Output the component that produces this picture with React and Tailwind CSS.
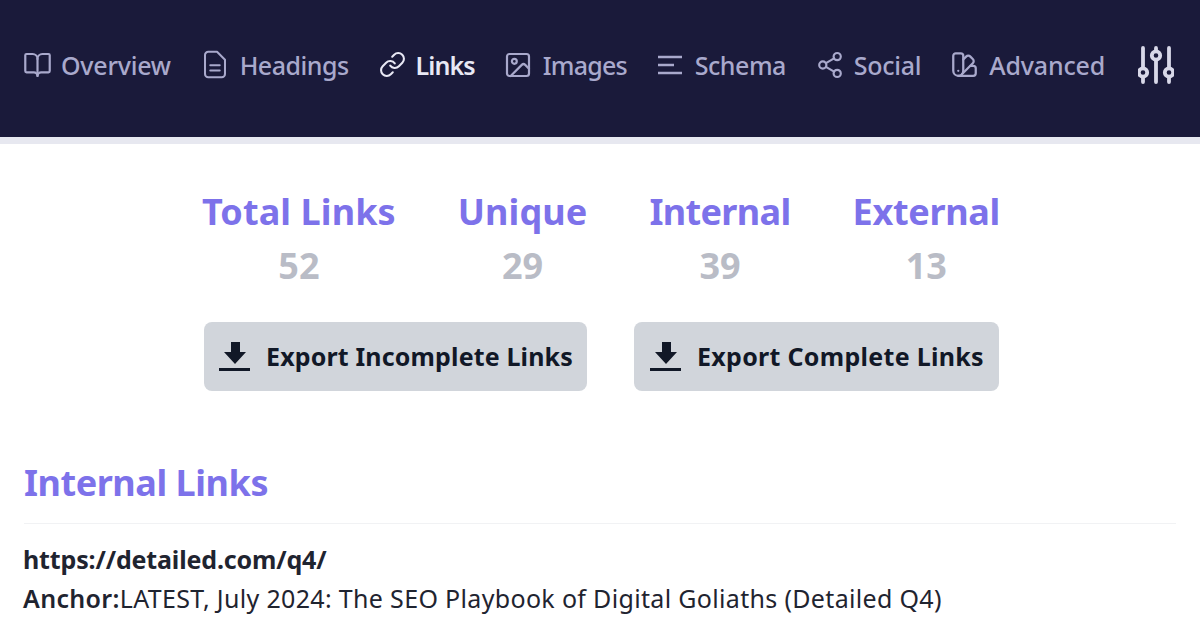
import React from 'react';
import { BookOpen, Link, Image, Share2, SwatchBook } from 'lucide-react';

const FileIcon = ({ className }) => (
    <svg viewBox="4 2 16 20" fill="none" stroke="currentColor" strokeWidth="1.5" strokeLinecap="round" strokeLinejoin="round" className={className}>
        <path d="M7 2.6h6.5l5.900 5.900V19a2.400 2.400 0 0 1-2.400 2.400H7A2.400 2.400 0 0 1 4.600 19V5A2.400 2.400 0 0 1 7 2.600z" />
        <path d="M8.500 12.500h7M8.500 16.500h7" />
    </svg>
);

const SchemaIcon = ({ className }) => (
    <svg viewBox="0 0 24 20" fill="none" stroke="currentColor" strokeWidth="2.4" className={className}>
        <path d="M0 2h24M0 10h16M0 18h24" />
    </svg>
);

const SlidersIcon = ({ className }) => (
    <svg viewBox="0 0 36 38" fill="none" stroke="currentColor" strokeWidth="3.800" strokeLinecap="round" className={className}>
        <path d="M5 2v19M5 32v4M18 2v3M18 14v22M31 2v19M31 32v4" />
        <circle cx="5" cy="26.500" r="4.200" />
        <circle cx="18" cy="9.500" r="4.200" />
        <circle cx="31" cy="26.500" r="4.200" />
    </svg>
);

const DownloadIcon = () => (
    <svg viewBox="0 0 31 29" fill="currentColor" className="w-[31px] h-[29px] shrink-0">
        <path d="M12 0h9v10h6L16 22 5 10h7zM0 26h31v3H0z" />
    </svg>
);

const navItems = [
    { label: 'Overview', icon: BookOpen, box: '2 3 20 18', iconClass: 'w-[25px] h-[22px] ml-[1px] mr-[11px]', text: 'tracking-[-0.25px]', after: 'mr-[33px]' },
    { label: 'Headings', icon: FileIcon, iconClass: 'w-[22px] h-[27px] mr-[14px]', text: 'tracking-[-0.5px]', after: 'mr-[31px]' },
    { label: 'Links', icon: Link, box: '2 2 20 20', iconClass: 'w-[23px] h-[23px] ml-[1px] mr-[12px]', text: 'tracking-[-0.9px]', after: 'mr-[31px]', active: true },
    { label: 'Images', icon: Image, box: '3 3 18 18', iconClass: 'w-[22px] h-[22px] ml-[1px] mr-[14px]', text: 'tracking-[-0.8px]', after: 'mr-[31px]' },
    { label: 'Schema', icon: SchemaIcon, iconClass: 'w-[24px] h-[20px] mr-[13px]', text: 'tracking-[-0.5px]', after: 'mr-[31px]' },
    { label: 'Social', icon: Share2, box: '3 2 18 20', iconClass: 'w-[24px] h-[24px] ml-[1px] mr-[12px]', text: 'tracking-[-0.3px]', after: 'mr-[31px]' },
    { label: 'Advanced', icon: SwatchBook, box: '2 2 20 20', iconClass: 'w-[25px] h-[25px] mr-[12px]', text: 'tracking-[-0.15px]', after: 'mr-[33px]' },
];

const stats = [
    { label: 'Total Links', value: 52, text: 'tracking-[0.1px]' },
    { label: 'Unique', value: 29, text: 'tracking-[0.1px]' },
    { label: 'Internal', value: 39, text: 'tracking-[-0.65px]' },
    { label: 'External', value: 13, text: 'tracking-[-0.3px]' },
];

const exportButtons = [
    { label: 'Export Incomplete Links', className: 'pl-[15px] pr-[14px] tracking-[0.15px]' },
    { label: 'Export Complete Links', className: 'pl-[16px] pr-[15px] tracking-[0.3px]' },
];

export default function App() {
    return (
        <div className="w-[1200px] h-[628px] overflow-hidden bg-white font-['Noto_Sans',sans-serif]">
            <nav className="h-[137px] bg-[#1a1a3a] flex items-center pl-[24px] pb-[8px]">
                {navItems.map(({ label, icon: Icon, box, iconClass, text, after, active }) => (
                    <div
                        key={label}
                        className={`flex items-center text-[25px] leading-[32px] font-medium ${after} ${active ? 'text-[#e8e8f4] font-semibold' : 'text-[#a9a9cc]'}`}
                    >
                        <Icon className={`${iconClass} overflow-visible`} viewBox={box} strokeWidth={1.8} />
                        <span className={text}>{label}</span>
                    </div>
                ))}
                <SlidersIcon className="w-[36px] h-[38px] text-[#d8d8e8]" />
            </nav>
            <div className="h-[7px] bg-[#e7e8f0]" />

            <div className="flex justify-center gap-[62px] pt-[43px] pl-[2px]">
                {stats.map((s) => (
                    <div key={s.label} className="flex flex-col items-center">
                        <div className={`text-[36px] leading-[50px] font-bold text-[#7d72ea] ${s.text}`}>{s.label}</div>
                        <div className="text-[36px] leading-[50px] font-bold text-[#b9bcc6] mt-[4px]">{s.value}</div>
                    </div>
                ))}
            </div>

            <div className="flex justify-center gap-[47px] mt-[31px] pl-[3px]">
                {exportButtons.map((b) => (
                    <button key={b.label} className={`h-[69px] rounded-[8px] bg-[#d1d5db] text-[#111827] flex items-center gap-[16px] text-[25px] font-bold ${b.className}`}>
                        <DownloadIcon />
                        {b.label}
                    </button>
                ))}
            </div>

            <div className="px-[24px] mt-[67px]">
                <h2 className="text-[36px] leading-[50px] tracking-[-0.45px] font-bold text-[#7d72ea] pb-[15px] border-b border-[#f1f2f4]">Internal Links</h2>
                <div className="mt-[16px] text-[25px] leading-[39px] text-[#1f2430] ml-[-1px]">
                    <div className="font-bold tracking-[-0.15px]">https://detailed.com/q4/</div>
                    <div className="tracking-[0.33px]"><span className="font-semibold">Anchor:</span>LATEST, July 2024: The SEO Playbook of Digital Goliaths (Detailed Q4)</div>
                </div>
            </div>
        </div>
    );
}
